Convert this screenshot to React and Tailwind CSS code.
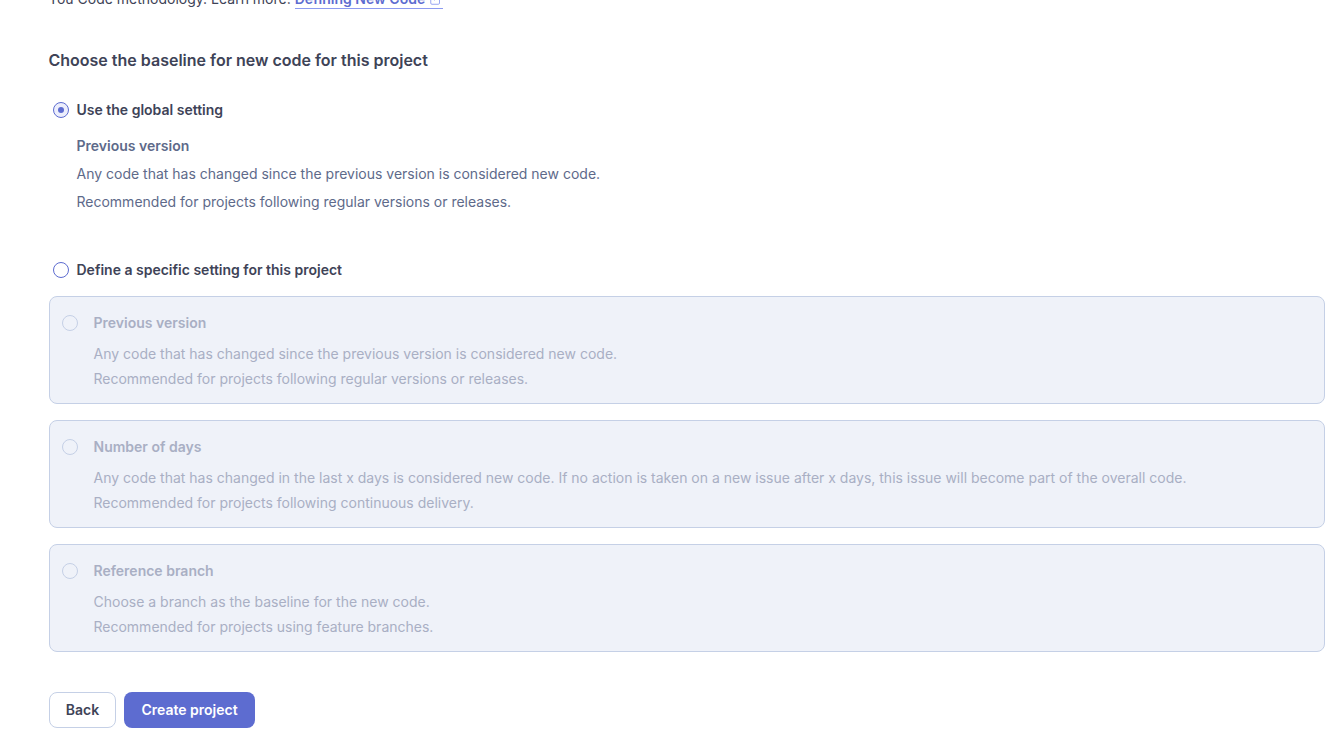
import { ExternalLink } from 'lucide-react';

const font = { fontFamily: 'Inter, sans-serif' };

function Radio({ checked, disabled }) {
  if (disabled) {
    return <span className="h-4 w-4 shrink-0 rounded-full border border-[#c5d0e6] bg-[#eff2f9]" />;
  }
  return (
    <span className={`flex h-4 w-4 shrink-0 items-center justify-center rounded-full border border-[#5d6cd0] ${checked ? 'bg-[#eceefc]' : 'bg-white'}`}>
      {checked && <span className="h-1.5 w-1.5 rounded-full bg-[#5d6cd0]" />}
    </span>
  );
}

function OptionCard({ title, lines }) {
  return (
    <div className="rounded-lg border border-[#c5d0e6] bg-[#eff2f9] pb-[14px] pl-3 pr-4 pt-4">
      <div className="flex items-center gap-[15.5px]">
        <Radio disabled />
        <span className="text-sm font-semibold leading-5 text-[#a9afc4]">{title}</span>
      </div>
      <div className="mt-[11px] flex flex-col gap-[5px] pl-[31.5px]">
        {lines.map((line) => (
          <p key={line} className="text-sm leading-5 text-[#a9afc4]">{line}</p>
        ))}
      </div>
    </div>
  );
}

export default function App() {
  return (
    <div style={font} className="h-[737px] overflow-hidden bg-white pl-[49px] pr-[18px]">
      <p className="-ml-[0.5px] -mt-[11px] flex items-center text-sm leading-5 text-[#3e4357]">
        <span>You Code methodology. Learn more:&nbsp;</span>
        <a className="flex items-center gap-1 border-b border-[#8c9af0] font-semibold leading-[19px] text-[#5d6cd0]">
          Defining New Code
          <ExternalLink size={14} strokeWidth={1.5} className="text-[#8c9af0]" />
        </a>
      </p>

      <h2 className="-ml-[0.5px] mt-[39px] text-base font-semibold leading-6 text-[#3e4357]">
        Choose the baseline for new code for this project
      </h2>

      <label className="mt-7 flex items-center gap-[7.5px] pl-1">
        <Radio checked />
        <span className="text-sm font-semibold leading-5 text-[#3e4357]">Use the global setting</span>
      </label>
      <div className="mt-4 pl-[27.5px]">
        <p className="text-sm font-semibold leading-5 text-[#5e6a8a]">Previous version</p>
        <p className="mt-2 text-sm leading-5 text-[#5e6a8a]">Any code that has changed since the previous version is considered new code.</p>
        <p className="mt-2 text-sm leading-5 text-[#5e6a8a]">Recommended for projects following regular versions or releases.</p>
      </div>

      <label className="mt-12 flex items-center gap-[7.5px] pl-1">
        <Radio />
        <span className="text-sm font-semibold leading-5 text-[#3e4357]">Define a specific setting for this project</span>
      </label>

      <div className="mt-4 flex flex-col gap-4">
        <OptionCard
          title="Previous version"
          lines={[
            'Any code that has changed since the previous version is considered new code.',
            'Recommended for projects following regular versions or releases.',
          ]}
        />
        <OptionCard
          title="Number of days"
          lines={[
            'Any code that has changed in the last x days is considered new code. If no action is taken on a new issue after x days, this issue will become part of the overall code.',
            'Recommended for projects following continuous delivery.',
          ]}
        />
        <OptionCard
          title="Reference branch"
          lines={[
            'Choose a branch as the baseline for the new code.',
            'Recommended for projects using feature branches.',
          ]}
        />
      </div>

      <div className="mt-10 flex gap-2">
        <button className="h-9 w-[67px] rounded-lg border border-[#c5d0e6] bg-white text-sm font-semibold text-[#3e4357]">Back</button>
        <button className="h-9 w-[131px] rounded-lg bg-[#5d6cd0] text-sm font-semibold text-white">Create project</button>
      </div>
    </div>
  );
}
